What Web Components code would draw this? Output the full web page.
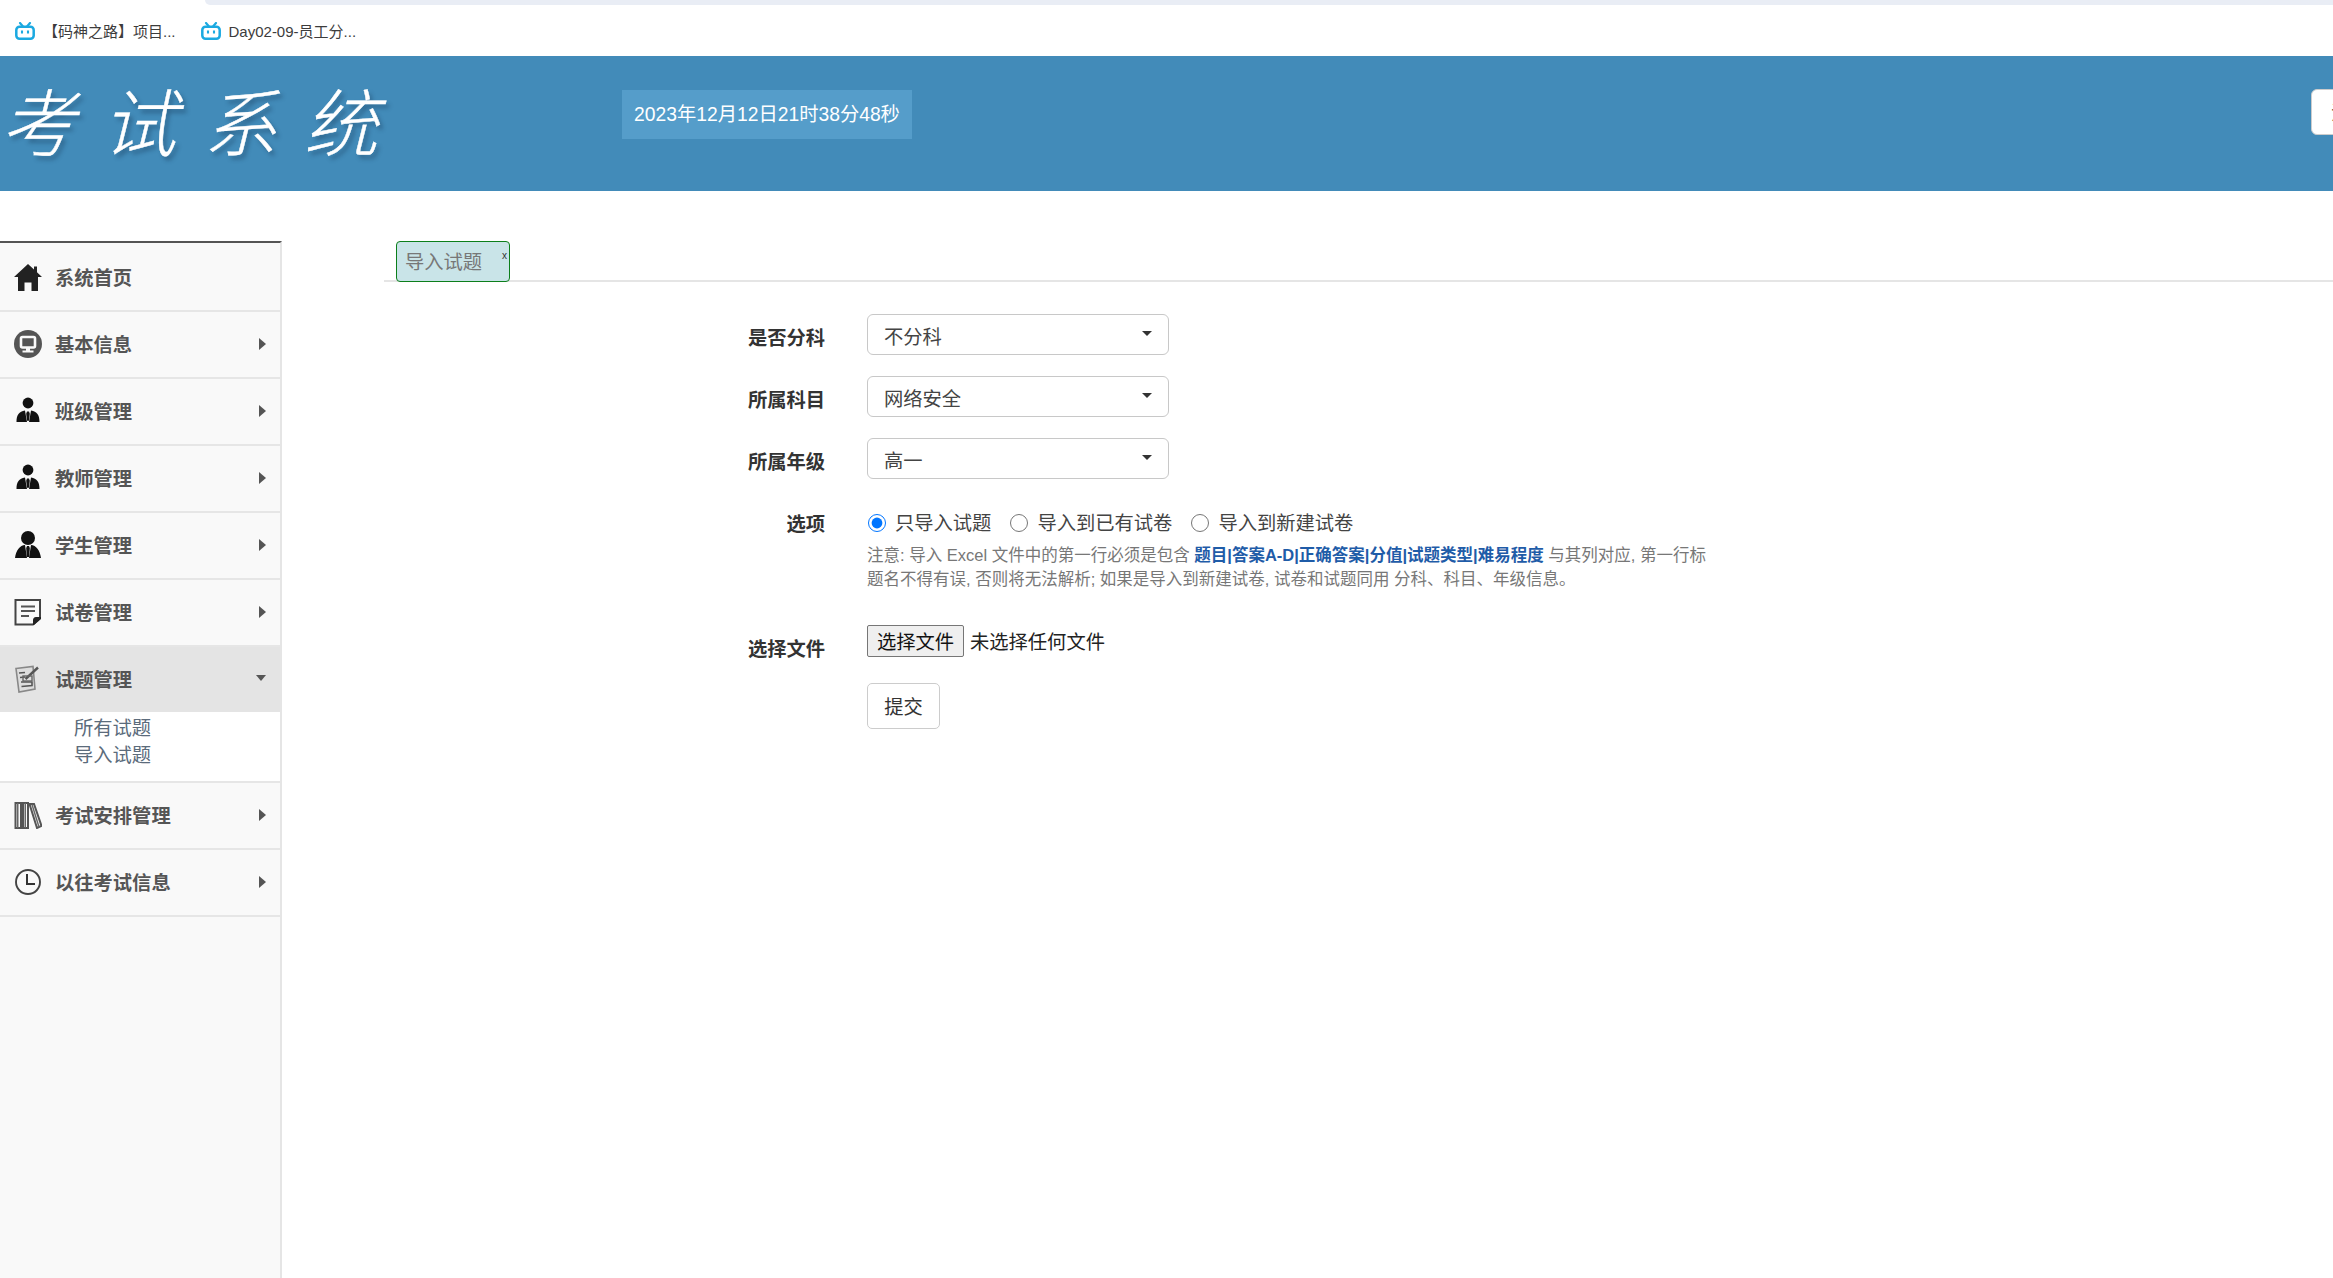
<!DOCTYPE html>
<html lang="zh-CN">
<head>
<meta charset="utf-8">
<title>考试系统</title>
<style>
html,body{margin:0;padding:0;width:2333px;height:1278px;overflow:hidden;background:#fff;font-family:"Liberation Sans","Noto Sans CJK SC",sans-serif;font-size:19.3px;color:#333}
exam-page{display:block}
</style>
</head>
<body>
<exam-page>
  <bookmark-bar>
    <book-mark>【码神之路】项目...</book-mark>
    <book-mark>Day02-09-员工分...</book-mark>
  </bookmark-bar>
  <app-header date="2023年12月12日21时38分48秒" action="注销">考试系统</app-header>
  <main-area>
    <side-menu>
      <menu-item icon="home" leaf>系统首页</menu-item>
      <menu-item icon="monitor">基本信息</menu-item>
      <menu-item icon="suit">班级管理</menu-item>
      <menu-item icon="suit">教师管理</menu-item>
      <menu-item icon="student">学生管理</menu-item>
      <menu-item icon="paper">试卷管理</menu-item>
      <menu-item icon="quiz" open>试题管理
        <sub-link slot="sub">所有试题</sub-link>
        <sub-link slot="sub">导入试题</sub-link>
      </menu-item>
      <menu-item icon="books">考试安排管理</menu-item>
      <menu-item icon="clock">以往考试信息</menu-item>
    </side-menu>
    <import-panel>
      <tab-bar><tab-chip>导入试题</tab-chip></tab-bar>
      <form-row label="是否分科" gap="21"><x-select>不分科</x-select></form-row>
      <form-row label="所属科目" gap="21"><x-select>网络安全</x-select></form-row>
      <form-row label="所属年级" gap="21"><x-select>高一</x-select></form-row>
      <form-row label="选项" gap="34">
        <radio-group></radio-group>
        <note-text></note-text>
      </form-row>
      <form-row label="选择文件" gap="26"><file-pick></file-pick></form-row>
      <form-row><submit-btn>提交</submit-btn></form-row>
    </import-panel>
  </main-area>
</exam-page>

<script>
const FONT = '"Liberation Sans","Noto Sans CJK SC",sans-serif';
function def(name, html){
  customElements.define(name, class extends HTMLElement{
    constructor(){super();this.attachShadow({mode:'open'}).innerHTML = typeof html==='function'?html(this):html;}
  });
}
const ICONS = {
  home:`<path fill="#222" d="M14 1 L20 6.5 V3.5 H23 V9.3 L28 14 H24 V28 H17.5 V19.5 H10.5 V28 H4 V14 H0 Z"/>`,
  monitor:`<circle cx="14" cy="14" r="14" fill="#555"/><rect x="7" y="7" width="14" height="10.5" rx="1.5" fill="none" stroke="#fafafa" stroke-width="2.6"/><path fill="#fafafa" d="M12 18h4v2.4h3.5v2H8.5v-2H12z"/>`,
  suit:`<circle cx="14" cy="6" r="5.4" fill="#111"/><path fill="#111" d="M2.5 25 C2.5 18 5 14.5 11 13.6 L13 25 Z M25.5 25 C25.5 18 23 14.5 17 13.6 L15 25 Z"/><path fill="#111" d="M13 14.5 h2 l.8 2.2 -.8 7 h-2 l-.8-7 z"/>`,
  student:`<circle cx="14" cy="7" r="7" fill="#111"/><path fill="#111" d="M1 27 C2 19 6 14.5 11 14 L13 27 Z M27 27 C26 19 22 14.5 17 14 L15 27 Z"/><path fill="#111" d="M13 15 h2 l.8 2 -.6 9 h-2.4 l-.6-9 z"/>`,
  paper:`<path fill="none" stroke="#444" stroke-width="2" d="M1.5 2 H26 V20 L19 26.5 H1.5 Z"/><path fill="#222" d="M27 19 V21 L20 27 H19 V22 C19 20.5 20 19 22 19 Z"/><path stroke="#555" stroke-width="2" fill="none" d="M7 8.5 H21 M7 13 H21 M7 18 H15"/>`,
  quiz:`<path fill="#ddd" stroke="#888" stroke-width="1.6" d="M2 3.5 L19 1.5 L21 24 L5 27 Z"/><path stroke="#555" stroke-width="1.6" fill="none" d="M5 8 L11 7.5 M6 12.5 L11 12 M7 17 H18 M7.5 21.5 L18 20.5 V16.5"/><path stroke="#555" stroke-width="2.4" fill="none" d="M11.5 14 L24 2.5"/><rect x="9" y="11" width="9" height="5" fill="none" stroke="#666" stroke-width="1.4"/>`,
  books:`<path fill="none" stroke="#555" stroke-width="2" d="M1.5 2 H7 V27 H1.5 Z M9 2 H14 V27 H9 Z"/><path fill="#666" d="M3 2 h1.5 v25 H3z M10.5 2 h1.5 v25 h-1.5z"/><path fill="none" stroke="#555" stroke-width="2" d="M15.5 3 H20 L27.5 25 L23 27 Z"/><path stroke="#666" stroke-width="1.4" d="M18 3.5 L25 26"/>`,
  clock:`<circle cx="14" cy="14" r="12" fill="none" stroke="#444" stroke-width="1.9"/><path fill="none" stroke="#333" stroke-width="2" d="M13 6 V16 H21"/>`
};

def('bookmark-bar',`<style>
:host{display:block;height:56px;box-sizing:border-box}
.strip{height:5px;margin-left:205px;background:#e9edf5;border-bottom-left-radius:6px}
.row{display:flex;gap:25px;padding:0 0 0 15px;height:51px;align-items:center}
</style><div class="strip"></div><div class="row"><slot></slot></div>`);

def('book-mark',`<style>
:host{display:inline-flex;align-items:center;gap:8px;font:15px ${FONT};color:#3c3c3c;white-space:nowrap}
svg{width:20px;height:18px;flex:none}
</style><svg viewBox="0 0 20 18"><g fill="none" stroke="#1ba9e1"><rect x="1.3" y="4.7" width="17.4" height="12" rx="3.2" stroke-width="2.5"/><path stroke-width="2.2" stroke-linecap="round" d="M5 1 L8 4.4 M15 1 L12 4.4"/><path stroke-width="2.1" d="M7 8.5 V11.5 M13 8.5 V11.5"/></g></svg><slot></slot>`);

def('app-header', el=>`<style>
:host{display:flex;height:135px;background:#428bb9;overflow:hidden;align-items:flex-start}
.logo{flex:none;width:400px;margin:18px 0 0 1px;font:italic 300 74px/90px "Noto Sans CJK SC",sans-serif;letter-spacing:27px;color:#fff;white-space:nowrap;-webkit-text-stroke:.4px #fff;text-shadow:3px 4px 4px rgba(20,50,80,.4)}
.date{flex:none;margin:34px 0 0 221px;width:290px;height:49px;box-sizing:border-box;background:#559dca;color:#fff;font:19.3px/49px ${FONT};text-align:center;white-space:nowrap}
.act{flex:none;margin:33px 0 0 1399px;height:46px;padding:0 19px;background:#fff;border:1px solid #ccc;border-radius:6px;font:19.3px ${FONT};color:#333;white-space:nowrap;box-sizing:border-box}
</style><div class="logo"><slot></slot></div><div class="date">${el.getAttribute('date')||'2023年12月12日21时38分48秒'}</div><button class="act">${el.getAttribute('action')||'注销'}</button>`);

def('main-area',`<style>
:host{display:flex;margin-top:50px;height:1037px;align-items:stretch}
</style><slot></slot>`);

def('side-menu',`<style>
:host{display:block;flex:none;width:282px;box-sizing:border-box;background:#f9f9f9;border-top:2px solid #555;border-right:2px solid #e5e5e5;padding-top:2px}
</style><slot></slot>`);

customElements.define('menu-item', class extends HTMLElement{
  constructor(){
    super();
    const open=this.hasAttribute('open'), leaf=this.hasAttribute('leaf');
    const ic=ICONS[this.getAttribute('icon')]||'';
    this.attachShadow({mode:'open'}).innerHTML=`<style>
    :host{display:block;border-bottom:2px solid #e6e6e6}
    .head{display:flex;align-items:center;height:65px;padding-left:14px;padding-right:14px;font:bold 19.3px ${FONT};color:#555;${open?'background:#e4e4e4;':''}}
    svg{width:28px;height:28px;flex:none;margin:-1px 13px 0 0}
    .t{flex:1;margin-top:-1px}
    .caret{flex:none;width:0;height:0;${leaf?'display:none;':''}${open?'border-left:5.5px solid transparent;border-right:5.5px solid transparent;border-top:6px solid #555;margin-top:-4px;':'border-top:6px solid transparent;border-bottom:6px solid transparent;border-left:7px solid #555;margin-top:-2px;'}}
    .sub{${open?'display:block;':'display:none;'}background:#fff;padding:3px 0 12px 74px}
    </style><div class="head"><svg viewBox="0 0 28 28">${ic}</svg><span class="t"><slot></slot></span><span class="caret"></span></div><div class="sub"><slot name="sub"></slot></div>`;
  }
});

def('sub-link',`<style>:host{display:block;font:19.3px/27px ${FONT};color:#5b6b7b}</style><slot></slot>`);

def('import-panel',`<style>:host{display:block;flex:1;min-width:0;margin-left:102px}</style><slot></slot>`);

def('tab-bar',`<style>:host{display:flex;height:41px;box-sizing:border-box;border-bottom:2px solid #e5e5e5;padding-left:12px;margin-bottom:32px;align-items:flex-start}</style><slot></slot>`);

def('tab-chip',`<style>
:host{display:block;position:relative;flex:none;box-sizing:border-box;width:114px;height:41px;background:#c9e4e8;border:1.5px solid #0c7f1b;border-radius:4px;font:19.3px/41px ${FONT};color:#777;padding-left:8px}
.x{position:absolute;right:2px;top:8px;font:10px/12px ${FONT};color:#333}
</style><slot></slot><span class="x">x</span>`);

customElements.define('form-row', class extends HTMLElement{
  constructor(){
    super();
    const gap=this.getAttribute('gap')||0;
    this.attachShadow({mode:'open'}).innerHTML=`<style>
    :host{display:grid;grid-template-columns:441px 1fr;column-gap:42px;margin-bottom:${gap}px}
    .l{font:bold 19.3px/49px ${FONT};color:#333;text-align:right;height:32px}
    .f{min-width:0}
    </style><div class="l">${this.getAttribute('label')||''}</div><div class="f"><slot></slot></div>`;
  }
});

def('x-select',`<style>
:host{display:flex;align-items:center;box-sizing:border-box;width:302px;height:41px;border:1.5px solid #c8c8c8;border-radius:6px;background:#fff;padding:0 16px;font:19.3px ${FONT};color:#444}
.t{flex:1;position:relative;top:1px}
.c{width:0;height:0;border-left:5px solid transparent;border-right:5px solid transparent;border-top:5.5px solid #333;margin-top:-2px}
</style><span class="t"><slot></slot></span><span class="c"></span>`);

def('radio-group',`<style>
:host{display:flex;align-items:center;height:29px;margin-top:7px;font:19.3px ${FONT};color:#444}
label{display:inline-flex;align-items:center;margin-right:18px;white-space:nowrap}
label:first-child{margin-right:19px}
label:first-child input{margin-left:0}
input{width:18px;height:18px;margin:2px 9px 0 1px;accent-color:#0075ff}
</style>
<label><input type="radio" name="o" checked>只导入试题</label>
<label><input type="radio" name="o">导入到已有试卷</label>
<label><input type="radio" name="o">导入到新建试卷</label>`);

def('note-text',`<style>
:host{display:block;margin-top:8px;font:16.5px/23.5px ${FONT};color:#777;white-space:nowrap}
b{color:#1f5ca8}
</style>注意: 导入 Excel 文件中的第一行必须是包含 <b>题目|答案A-D|正确答案|分值|试题类型|难易程度</b> 与其列对应, 第一行标<br>题名不得有误, 否则将无法解析; 如果是导入到新建试卷, 试卷和试题同用 分科、科目、年级信息。`);

def('file-pick',`<style>
:host{display:flex;align-items:center;height:32px;font:19.3px ${FONT};color:#222}
button{box-sizing:border-box;width:97px;height:32px;padding:0;background:#efefef;border:1.5px solid #767676;border-radius:2px;font:19.3px ${FONT};color:#111;margin-right:6px}
</style><button type="button">选择文件</button><span>未选择任何文件</span>`);

def('submit-btn',`<style>
:host{display:flex;align-items:center;justify-content:center;box-sizing:border-box;width:73px;height:46px;border:1.5px solid #ccc;border-radius:5px;background:#fff;font:19.3px ${FONT};color:#333}
</style><slot></slot>`);
</script>
</body>
</html>
